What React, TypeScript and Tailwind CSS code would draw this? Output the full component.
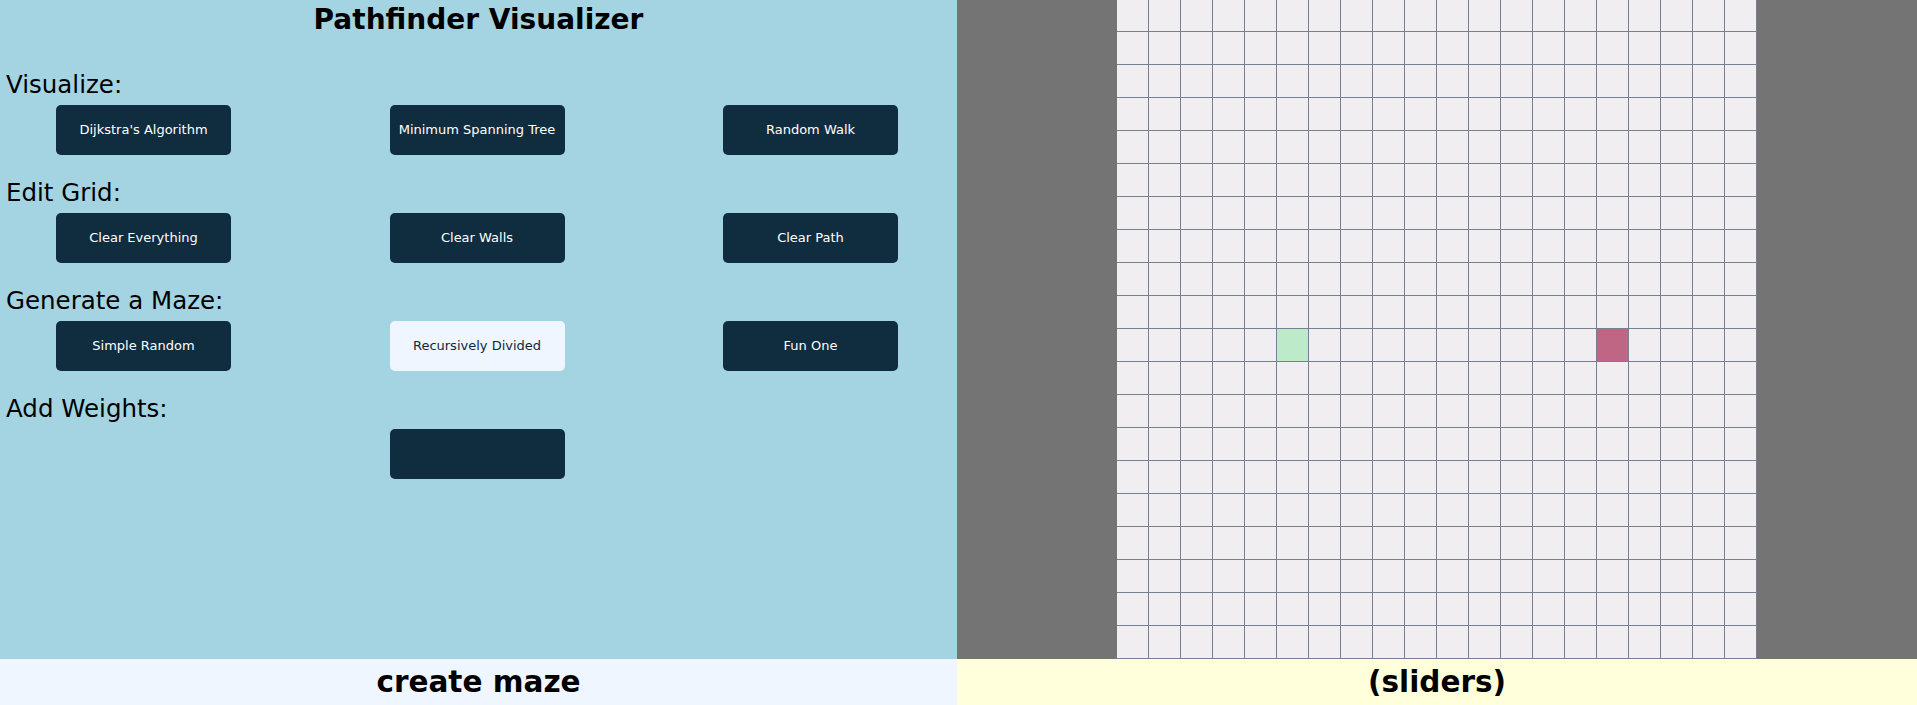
import React from "react";

const FONT = { fontFamily: '"DejaVu Sans", "Open Sans", sans-serif' };

function Btn({ label, light }: { label?: string; light?: boolean }) {
  return (
    <div
      className={
        "w-[175px] h-[50px] rounded-[5px] flex items-center justify-center text-[13px] shrink-0 " +
        (light ? "bg-[#eff6ff] text-[#10293a]" : "bg-[#0f2d3f] text-white")
      }
    >
      {label}
    </div>
  );
}

function Section({ title, children, center }: { title: string; children: React.ReactNode; center?: boolean }) {
  return (
    <div className="flex flex-col">
      <div className="pl-[6px] text-[24.5px] leading-[24px] text-black h-[24px]">{title}</div>
      <div className={"mt-[8px] flex " + (center ? "pl-[390px]" : "pl-[56px] gap-[158.5px]")}>{children}</div>
    </div>
  );
}

export default function App() {
  const rows = 20;
  const cols = 20;
  const cells = Array.from({ length: rows * cols }, (_, i) => i);
  return (
    <div className="w-[1917px] h-[705px] flex flex-col overflow-hidden" style={FONT}>
      <div className="flex h-[659px]">
        <div className="w-[957px] h-full bg-[#a4d4e2] flex flex-col">
          <h1 className="mt-[6px] mb-[39px] h-[28px] text-[28px] leading-[28px] font-bold text-center text-black">
            Pathfinder Visualizer
          </h1>
          <div className="flex flex-col gap-[26px]">
            <Section title="Visualize:">
              <Btn label="Dijkstra's Algorithm" />
              <Btn label="Minimum Spanning Tree" />
              <Btn label="Random Walk" />
            </Section>
            <Section title="Edit Grid:">
              <Btn label="Clear Everything" />
              <Btn label="Clear Walls" />
              <Btn label="Clear Path" />
            </Section>
            <Section title="Generate a Maze:">
              <Btn label="Simple Random" />
              <Btn label="Recursively Divided" light />
              <Btn label="Fun One" />
            </Section>
            <Section title="Add Weights:" center>
              <Btn />
            </Section>
          </div>
        </div>
        <div className="w-[960px] h-full bg-[#747474] flex justify-center items-end overflow-hidden">
          <div className="grid grid-cols-[repeat(20,32px)] shrink-0">
            {cells.map((i) => {
              const r = Math.floor(i / cols);
              const c = i % cols;
              let bg = "bg-[#f0eef0]";
              if (r === 10 && c === 5) bg = "bg-[#bdeac8]";
              if (r === 10 && c === 15) bg = "bg-[#bf6685]";
              return <div key={i} className={"w-[32px] h-[33px] border-r border-b border-[#778091] " + bg} />;
            })}
          </div>
        </div>
      </div>
      <div className="flex h-[46px]">
        <div className="w-[957px] bg-[#eff6ff] text-center text-[29.5px] leading-[46px] font-bold text-black">create maze</div>
        <div className="w-[960px] bg-[#ffffdc] text-center text-[29.5px] leading-[46px] font-bold text-black">(sliders)</div>
      </div>
    </div>
  );
}
